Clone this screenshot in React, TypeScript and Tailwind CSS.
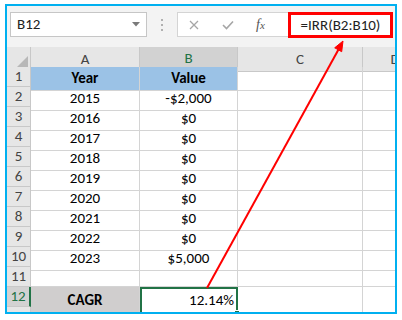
import React from 'react';

const FONT = { fontFamily: 'Carlito, Calibri, Lato, "Open Sans", sans-serif' };

const ROWS: { a: string; b: string }[] = [
  { a: 'Year', b: 'Value' },
  { a: '2015', b: '-$2,000' },
  { a: '2016', b: '$0' },
  { a: '2017', b: '$0' },
  { a: '2018', b: '$0' },
  { a: '2019', b: '$0' },
  { a: '2020', b: '$0' },
  { a: '2021', b: '$0' },
  { a: '2022', b: '$0' },
  { a: '2023', b: '$5,000' },
  { a: '', b: '' },
];

const COLS = 'grid grid-cols-[24px_109px_98px_125px_64px]';

function RowHead({ n, active }: { n?: number; active?: boolean }) {
  return (
    <div
      className={
        active
          ? 'h-[20px] flex items-center justify-center bg-[#d2d2d2] text-[#217346] border-r-2 border-r-[#217346] border-b border-b-[#c8c8c8]'
          : 'h-[20px] flex items-center justify-center bg-[#e6e6e6] text-[#444] border-r border-b border-[#c8c8c8]'
      }
    >
      {n}
    </div>
  );
}

export default function App() {
  return (
    <div className="relative w-[402px] h-[320px] bg-white overflow-hidden text-[15px] text-black" style={FONT}>
      <div className="ml-[5px] mt-[4px] w-[392px] h-[310px] border-2 border-[#00b0f0] overflow-hidden flex flex-col">
        {/* formula bar */}
        <div className="h-[41px] shrink-0 bg-[#f3f3f3] flex items-start pt-[6px] pl-[3px]">
          <div className="w-[137px] h-[25px] bg-white border border-[#c6c6c6] flex items-center justify-between pl-[6px] pr-[6px]">
            <span className="text-[#222]">B12</span>
            <svg width="8" height="5" viewBox="0 0 8 5"><polygon points="0,0 8,0 4,4.5" fill="#7a7a7a" /></svg>
          </div>
          <div className="w-[30px] h-[25px] flex flex-col items-center justify-center gap-[3px]">
            <span className="w-[2px] h-[2px] bg-[#b0b0b0]" />
            <span className="w-[2px] h-[2px] bg-[#b0b0b0]" />
            <span className="w-[2px] h-[2px] bg-[#b0b0b0]" />
          </div>
          <div className="w-[111px] h-[25px] bg-white border border-[#d4d4d4] border-r-0 flex items-center">
            <svg className="ml-[11px]" width="10" height="10" viewBox="0 0 10 10">
              <path d="M1 1 L9 9 M9 1 L1 9" stroke="#a6a6a6" strokeWidth="1.3" />
            </svg>
            <svg className="ml-[23px]" width="12" height="10" viewBox="0 0 12 10">
              <path d="M1 5 L4.5 8.5 L11 1.5" stroke="#a6a6a6" strokeWidth="1.6" fill="none" />
            </svg>
            <span className="ml-[22px] italic text-[14px] text-[#555]" style={{ fontFamily: '"Liberation Serif", serif' }}>
              f<span className="text-[11px]">x</span>
            </span>
          </div>
          <div className="w-[105px] h-[26px] bg-white border-[3px] border-[#ff0000] flex items-center justify-center">
            <span className="text-[#222]">=IRR(B2:B10)</span>
          </div>
        </div>

        {/* column headers */}
        <div className={COLS + ' h-[20px] shrink-0 text-[#444]'}>
          <div className="bg-[#e6e6e6] border-r border-b border-[#c8c8c8] flex items-end justify-end p-[2px]">
            <svg width="13" height="13" viewBox="0 0 13 13"><polygon points="13,0 13,13 0,13" fill="#b8b8b8" /></svg>
          </div>
          <div className="bg-[#e6e6e6] border-r border-b border-[#c8c8c8] flex items-center justify-center">A</div>
          <div className="bg-[#d2d2d2] border-r border-[#c8c8c8] border-b-2 border-b-[#217346] flex items-center justify-center text-[#217346]">B</div>
          <div className="bg-[#e6e6e6] border-r border-b border-[#c8c8c8] flex items-center justify-center">C</div>
          <div className="bg-[#e6e6e6] border-b border-[#c8c8c8] flex items-center justify-center">D</div>
        </div>

        {/* rows */}
        {ROWS.map((r, i) => (
          <div key={i} className={COLS + ' h-[20px] shrink-0'}>
            <RowHead n={i + 1} />
            <div
              className={
                'border-r border-b border-[#d4d4d4] flex items-center justify-center' +
                (i === 0 ? ' bg-[#9bc2e6] font-bold' : '')
              }
            >
              {r.a}
            </div>
            <div
              className={
                'border-r border-b border-[#d4d4d4] flex items-center justify-center' +
                (i === 0 ? ' bg-[#9bc2e6] font-bold' : '')
              }
            >
              {r.b}
            </div>
            <div className="border-r border-b border-[#d4d4d4]" />
            <div className="border-b border-[#d4d4d4]" />
          </div>
        ))}

        <div className={COLS + ' h-[20px] shrink-0'}>
          <RowHead n={12} active />
          <div className="bg-[#d0cece] border-r border-b border-[#d4d4d4] flex items-center justify-center font-bold">CAGR</div>
          <div className="relative border-2 border-[#217346] flex items-center justify-end pr-[2px]">
            12.14%
            <span className="absolute right-[-4px] bottom-[-4px] w-[6px] h-[6px] bg-[#217346] border border-white" />
          </div>
          <div className="border-r border-b border-[#d4d4d4]" />
          <div className="border-b border-[#d4d4d4]" />
        </div>

        {/* partial row below */}
        <div className={COLS + ' h-[20px] shrink-0'}>
          <RowHead />
          <div className="border-r border-[#d4d4d4]" />
          <div className="border-r border-[#d4d4d4]" />
          <div className="border-r border-[#d4d4d4]" />
          <div />
        </div>
      </div>

      <svg className="absolute left-0 top-0 pointer-events-none" width="402" height="320" viewBox="0 0 402 320">
        <line x1="207" y1="288" x2="338.5" y2="49.5" stroke="#ff0000" strokeWidth="2" />
        <polygon points="343,41 341.7,51.7 334.7,47.8" fill="#ff0000" stroke="#ff0000" strokeWidth="1" />
      </svg>
    </div>
  );
}
